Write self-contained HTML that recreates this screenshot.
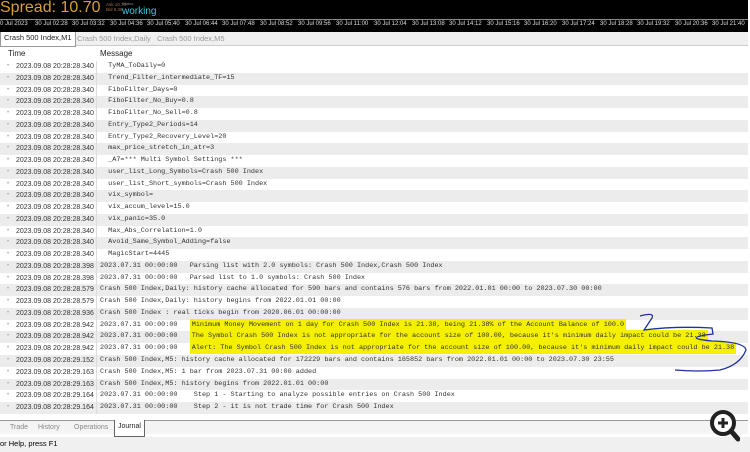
<!DOCTYPE html><html><head><style>
body{margin:0;width:750px;height:452px;overflow:hidden;background:#fff;font-family:"Liberation Sans",sans-serif;position:relative}
.top{position:absolute;left:0;top:0;width:748px;height:32px;background:#000}
.ax{position:absolute;top:19px;left:0;width:748px;border-top:1px solid #888}
.tl{position:absolute;top:21px;font-size:6px;color:#ddd;white-space:nowrap}
.tabs{position:absolute;top:32px;left:0;width:748px;height:13px;background:#f0f0f0;border-bottom:1px solid #ccc;font-size:7.5px}
.tabs span{position:absolute;top:2px;color:#999}
.hd{position:absolute;top:46px;left:0;width:748px;height:14px;font-size:8px;color:#222}
.row{position:absolute;left:0;width:748px;height:11.76px;font-size:7.5px;line-height:11.76px}
.row .t{position:absolute;left:16px;color:#333;font-size:7px}
.row .b{position:absolute;left:7px;color:#aaa;font-size:6px}
.row .m{position:absolute;left:100px;font-family:"Liberation Mono",monospace;font-size:6.8px;color:#333;white-space:pre}
.row .d{position:absolute;left:96px;top:0;height:100%;border-left:1px solid #ddd}
.g{background:#ececec}
.hl{background:#f5f000;padding:2px 2px}
.bt{position:absolute;top:420px;left:0;width:748px;height:13px;border-top:1px solid #999;font-size:7px;color:#888;background:#f4f4f4}
.st{position:absolute;top:437px;left:0;width:750px;height:15px;background:#f0f0f0;font-size:7.5px;line-height:13px}
</style></head><body>
<div class="top"><div style="position:absolute;left:0;top:-1px;font-size:16px;color:#d8a030">Spread: 10.70</div>
<div style="position:absolute;left:106px;top:2px;font-size:4.5px;color:#a07050;line-height:5px">Ask 10.70<br>Bid 6.38</div>
<div style="position:absolute;left:122px;top:1px;font-size:4px;color:#888">Status</div>
<div style="position:absolute;left:122px;top:6px;font-size:10px;color:#3cc8e0">working</div>
<div class="ax"></div>
<span class="tl" style="left:0">0 Jul 2023</span><span class="tl" style="left:35px">30 Jul 02:28</span><span class="tl" style="left:72px">30 Jul 03:32</span><span class="tl" style="left:110px">30 Jul 04:36</span><span class="tl" style="left:147px">30 Jul 05:40</span><span class="tl" style="left:185px">30 Jul 06:44</span><span class="tl" style="left:222px">30 Jul 07:48</span><span class="tl" style="left:260px">30 Jul 08:52</span><span class="tl" style="left:298px">30 Jul 09:56</span><span class="tl" style="left:336px">30 Jul 11:00</span><span class="tl" style="left:374px">30 Jul 12:04</span><span class="tl" style="left:412px">30 Jul 13:08</span><span class="tl" style="left:449px">30 Jul 14:12</span><span class="tl" style="left:487px">30 Jul 15:16</span><span class="tl" style="left:524px">30 Jul 16:20</span><span class="tl" style="left:562px">30 Jul 17:24</span><span class="tl" style="left:600px">30 Jul 18:28</span><span class="tl" style="left:637px">30 Jul 19:32</span><span class="tl" style="left:675px">30 Jul 20:36</span><span class="tl" style="left:712px">30 Jul 21:40</span>
</div>
<div class="tabs"><span style="left:0;top:0;height:12px;padding:1px 3px;background:#fff;color:#222;border:1px solid #999;border-top:0">Crash 500 Index,M1</span><span style="left:77px">Crash 500 Index,Daily</span><span style="left:157px">Crash 500 Index,M5</span></div>
<div class="hd"><span style="position:absolute;left:8px;top:3px">Time</span><span style="position:absolute;left:100px;top:3px">Message</span></div>
<div id="rows"></div>
<div class="bt"><span style="position:absolute;left:10px;top:3px">Trade</span><span style="position:absolute;left:38px;top:3px">History</span><span style="position:absolute;left:74px;top:3px">Operations</span><span style="position:absolute;left:114px;top:-1px;height:13px;background:#fff;border:1px solid #666;border-top:0;padding:3px 3px 0;color:#222">Journal</span></div>
<div class="st">or Help, press F1</div>
<svg style="position:absolute;left:708px;top:408px" width="32" height="34"><circle cx="15" cy="15" r="11" fill="#fff" stroke="#222" stroke-width="4"/><path d="M10 15h10M15 10v10" stroke="#222" stroke-width="3"/><path d="M23 23l7 8" stroke="#222" stroke-width="5" stroke-linecap="round"/></svg>
<svg style="position:absolute;left:600px;top:310px" width="150" height="70"><path d="M40 6 Q55 2 52 8 L44 20 Q75 16 112 18 L113 24 Q80 28 112 31 Q145 32 146 40 Q140 55 120 60 Q100 62 75 60" fill="none" stroke="#2030a0" stroke-width="1.3"/></svg>
<script>
var rs=[["340","  TyMA_ToDaily=0"],["340","  Trend_Filter_intermediate_TF=15"],["340","  FiboFilter_Days=0"],["340","  FiboFilter_No_Buy=0.8"],["340","  FiboFilter_No_Sell=0.8"],["340","  Entry_Type2_Periods=14"],["340","  Entry_Type2_Recovery_Level=20"],["340","  max_price_stretch_in_atr=3"],["340","  _A7=*** Multi Symbol Settings ***"],["340","  user_list_Long_Symbols=Crash 500 Index"],["340","  user_list_Short_symbols=Crash 500 Index"],["340","  vix_symbol="],["340","  vix_accum_level=15.0"],["340","  vix_panic=35.0"],["340","  Max_Abs_Correlation=1.0"],["340","  Avoid_Same_Symbol_Adding=false"],["340","  MagicStart=4445"],["398","2023.07.31 00:00:00   Parsing list with 2.0 symbols: Crash 500 Index,Crash 500 Index"],["398","2023.07.31 00:00:00   Parsed list to 1.0 symbols: Crash 500 Index"],["579","Crash 500 Index,Daily: history cache allocated for 590 bars and contains 576 bars from 2022.01.01 00:00 to 2023.07.30 00:00"],["579","Crash 500 Index,Daily: history begins from 2022.01.01 00:00"],["936","Crash 500 Index : real ticks begin from 2020.06.01 00:00:00"],["942","2023.07.31 00:00:00   ","Minimum Money Movement on 1 day for Crash 500 Index is 21.38, being 21.38% of the Account Balance of 100.0"],["942","2023.07.31 00:00:00   ","The Symbol Crash 500 Index is not appropriate for the account size of 100.00, because it's minimum daily impact could be 21.38"],["942","2023.07.31 00:00:00   ","Alert: The Symbol Crash 500 Index is not appropriate for the account size of 100.00, because it's minimum daily impact could be 21.38"],["29.152","Crash 500 Index,M5: history cache allocated for 172229 bars and contains 165852 bars from 2022.01.01 00:00 to 2023.07.30 23:55"],["29.163","Crash 500 Index,M5: 1 bar from 2023.07.31 00:00 added"],["29.163","Crash 500 Index,M5: history begins from 2022.01.01 00:00"],["29.164","2023.07.31 00:00:00    Step 1 - Starting to analyze possible entries on Crash 500 Index"],["29.164","2023.07.31 00:00:00    Step 2 - it is not trade time for Crash 500 Index"]];
var h="";rs.forEach(function(r,i){var t=r[0].indexOf(".")>0?"2023.09.08 20:28:"+r[0]:"2023.09.08 20:28:28."+r[0];
var m=r[2]?r[1]+'<span class="hl">'+r[2]+'</span>':r[1];
h+='<div class="row'+(i%2?' g':'')+'" style="top:'+(61+i*11.76)+'px"><span class="b">•</span><span class="t">'+t+'</span><span class="d"></span><span class="m">'+m+'</span></div>';});
document.getElementById("rows").innerHTML=h;
</script>
</body></html>
